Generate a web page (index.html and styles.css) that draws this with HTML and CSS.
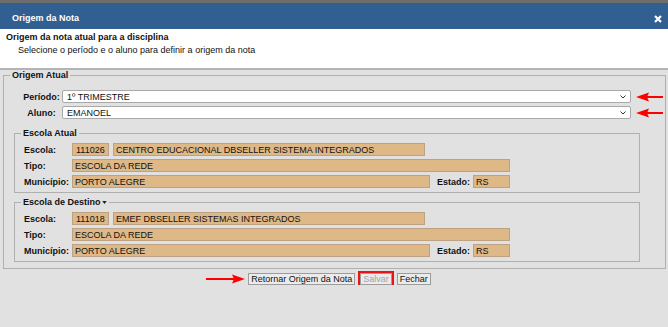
FILE: index.html
```html
<!DOCTYPE html>
<html>
<head>
    <title>Origem da Nota</title>
    <meta charset="UTF-8">
    <link rel="stylesheet" href="styles.css">
</head>
<body>
    <div class="topstrip"></div>
    <div class="titlebar">
        <span>Origem da Nota</span>
        <svg class="close" width="8" height="8" viewBox="0 0 8 8"><path d="M1 1L7 7M7 1L1 7" stroke="#fff" stroke-width="2.2"/></svg>
    </div>

    <div class="intro">
        <div class="intro-title">Origem da nota atual para a disciplina</div>
        <div class="intro-sub">Selecione o período e o aluno para definir a origem da nota</div>
    </div>

    <form class="main">
        <fieldset class="outer">
            <legend>Origem Atual</legend>

            <div class="sel-row">
                <label>Período:</label>
                <div class="select">
                    <span>1º TRIMESTRE</span>
                    <svg width="6" height="4" viewBox="0 0 6 4"><path d="M0.5 0.5L3 3L5.5 0.5" fill="none" stroke="#333" stroke-width="1"/></svg>
                </div>
                <svg class="arrow" width="27" height="10" viewBox="0 0 27 10"><path d="M0 5L13 0.5L11.5 4H27V6H11.5L13 9.5Z" fill="#f00"/></svg>
            </div>
            <div class="sel-row">
                <label>Aluno:</label>
                <div class="select">
                    <span>EMANOEL</span>
                    <svg width="6" height="4" viewBox="0 0 6 4"><path d="M0.5 0.5L3 3L5.5 0.5" fill="none" stroke="#333" stroke-width="1"/></svg>
                </div>
                <svg class="arrow" width="27" height="10" viewBox="0 0 27 10"><path d="M0 5L13 0.5L11.5 4H27V6H11.5L13 9.5Z" fill="#f00"/></svg>
            </div>

            <fieldset class="school">
                <legend>Escola Atual</legend>
                <div class="row">
                    <label>Escola:</label>
                    <input class="field code" value="111026" readonly>
                    <input class="field name" value="CENTRO EDUCACIONAL DBSELLER SISTEMA INTEGRADOS" readonly>
                </div>
                <div class="row">
                    <label>Tipo:</label>
                    <input class="field tipo" value="ESCOLA DA REDE" readonly>
                </div>
                <div class="row">
                    <label>Município:</label>
                    <input class="field mun" value="PORTO ALEGRE" readonly>
                    <label class="uf-label">Estado:</label>
                    <input class="field uf" value="RS" readonly>
                </div>
            </fieldset>

            <fieldset class="school">
                <legend>Escola de Destino<svg class="drop" width="5" height="3" viewBox="0 0 6 4"><path d="M0 0H6L3 4Z" fill="#222"/></svg></legend>
                <div class="row">
                    <label>Escola:</label>
                    <input class="field code" value="111018" readonly>
                    <input class="field name" value="EMEF DBSELLER SISTEMAS INTEGRADOS" readonly>
                </div>
                <div class="row">
                    <label>Tipo:</label>
                    <input class="field tipo" value="ESCOLA DA REDE" readonly>
                </div>
                <div class="row">
                    <label>Município:</label>
                    <input class="field mun" value="PORTO ALEGRE" readonly>
                    <label class="uf-label">Estado:</label>
                    <input class="field uf" value="RS" readonly>
                </div>
            </fieldset>
        </fieldset>

        <div class="actions">
            <svg class="pointer" width="39" height="10" viewBox="0 0 39 10"><path d="M39 5L26 0.5L27.5 4H0V6H27.5L26 9.5Z" fill="#f00"/></svg>
            <div class="buttons">
                <button type="button" class="btn">Retornar Origem da Nota</button>
                <button type="button" class="btn hl" disabled>Salvar</button>
                <button type="button" class="btn">Fechar</button>
            </div>
        </div>
    </form>
</body>
</html>
```

FILE: styles.css
```css
* { box-sizing: border-box; }
body { margin: 0; background: #e1e1e1; font-family: "Liberation Sans", Arial, sans-serif; font-size: 9px; color: #111; }

.topstrip { height: 3px; background: #6e6e6e; }
.titlebar {
    height: 26px;
    background: #315f92;
    color: #fff;
    font-weight: bold;
    line-height: 11px;
    padding: 10px 6px 0 12px;
    display: flex;
    justify-content: space-between;
    align-items: flex-start;
}
.close { margin-top: 2px; }

.intro { height: 41px; background: #fff; padding: 3px 0 0 6px; border-bottom: 2px solid #b4b4b4; line-height: 11px; }
.intro-title { font-weight: bold; }
.intro-sub { margin-top: 2px; padding-left: 12px; }

fieldset { min-width: 0; }
legend { font-weight: bold; line-height: 10px; padding: 0 2px; }

.outer { margin: 0 2px 0 3px; border: 1px solid #b0b0b0; padding: 10px 0 6px 10px; }
.outer > legend { margin-left: -4px; }

.sel-row { display: flex; align-items: center; height: 13px; padding-left: 9px; }
.sel-row + .sel-row { margin-top: 3px; }
.sel-row label { width: 37px; margin-right: 2px; text-align: center; font-weight: bold; white-space: nowrap; }
.select {
    width: 569px;
    height: 13px;
    background: #fff;
    border: 1px solid #a9a9a9;
    border-radius: 2px;
    padding: 0 4px;
    display: flex;
    align-items: center;
    justify-content: space-between;
}
.arrow { margin-left: 5px; }

.school { width: 626px; margin: 9px 0 0; border: 1px solid #b0b0b0; padding: 5px 0 4px 9px; }
.school + .school { margin-top: 4px; }
.school > legend { margin-left: -3px; }
.drop { margin-left: 1px; vertical-align: 1px; }

.row { display: flex; align-items: center; height: 13px; }
.row + .row { margin-top: 3px; }
.row label { width: 48px; font-weight: bold; white-space: nowrap; }
.field {
    height: 13px;
    border: 1px solid #bca283;
    background: #deb887;
    font: inherit;
    color: #111;
    padding: 0 2px;
    outline: none;
}
.code { width: 37px; padding: 0 3px; }
.name { width: 312px; margin-left: 4px; }
.tipo { width: 438px; }
.mun { width: 358px; }
.row .uf-label { width: 36px; margin-left: 7px; }
.uf { width: 37px; }

.actions { display: grid; grid-template-columns: 1fr auto 1fr; align-items: center; margin-top: 4px; padding-left: 11px; }
.pointer { justify-self: end; margin-right: 3px; }
.buttons { display: flex; gap: 5px; }
.btn {
    height: 12px;
    padding: 0 2px;
    border: 1px solid #9c9c9c;
    background: #ebebeb;
    font: inherit;
    line-height: 10px;
    color: #111;
}
.btn:disabled { color: #a3a3a3; }
.hl { outline: 2px solid #e8141a; outline-offset: 0; }
```
